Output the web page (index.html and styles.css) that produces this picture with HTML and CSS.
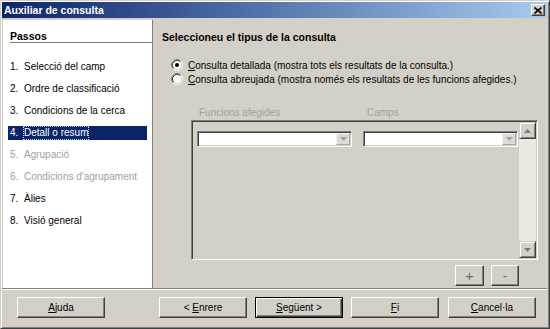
FILE: index.html
```html
<!DOCTYPE html>
<html lang="ca">
<head>
<meta charset="utf-8">
<title>Auxiliar de consulta</title>
<link rel="stylesheet" href="styles.css">
</head>
<body>
<div class="window">
  <div class="titlebar">
    <span class="title">Auxiliar de consulta</span>
    <span class="close-btn">
      <svg width="8" height="7" viewBox="0 0 8 7"><path d="M0.5 0.5 L7.5 6.5 M7.5 0.5 L0.5 6.5" stroke="#000" stroke-width="1.6" fill="none"/></svg>
    </span>
  </div>
  <div class="main">
    <div class="steps">
      <div class="steps-head">Passos</div>
      <ul class="step-list">
        <li><span class="num">1.</span>Selecció del camp</li>
        <li><span class="num">2.</span>Ordre de classificació</li>
        <li><span class="num">3.</span>Condicions de la cerca</li>
        <li class="active"><span class="num">4.</span><span class="focus">Detall o resum</span></li>
        <li class="disabled"><span class="num">5.</span>Agrupació</li>
        <li class="disabled"><span class="num">6.</span>Condicions d'agrupament</li>
        <li><span class="num">7.</span>Àlies</li>
        <li><span class="num">8.</span>Visió general</li>
      </ul>
    </div>
    <div class="content">
      <div class="heading">Seleccioneu el tipus de la consulta</div>
      <div class="radios">
        <div class="radio">
          <svg class="radio-box" width="12" height="12" viewBox="0 0 12 12">
            <circle cx="6" cy="6" r="4.5" fill="#fff"/>
            <path d="M2.11 9.89 A5.5 5.5 0 0 1 9.89 2.11" stroke="#808080" fill="none"/>
            <path d="M9.89 2.11 A5.5 5.5 0 0 1 2.11 9.89" stroke="#fff" fill="none"/>
            <path d="M2.82 9.18 A4.5 4.5 0 0 1 9.18 2.82" stroke="#404040" fill="none"/>
            <path d="M9.18 2.82 A4.5 4.5 0 0 1 2.82 9.18" stroke="#d4d0c8" fill="none"/>
            <circle cx="6" cy="6" r="2" fill="#000"/>
          </svg>
          <span><u>C</u>onsulta detallada (mostra tots els resultats de la consulta.)</span>
        </div>
        <div class="radio">
          <svg class="radio-box" width="12" height="12" viewBox="0 0 12 12">
            <circle cx="6" cy="6" r="4.5" fill="#fff"/>
            <path d="M2.11 9.89 A5.5 5.5 0 0 1 9.89 2.11" stroke="#808080" fill="none"/>
            <path d="M9.89 2.11 A5.5 5.5 0 0 1 2.11 9.89" stroke="#fff" fill="none"/>
            <path d="M2.82 9.18 A4.5 4.5 0 0 1 9.18 2.82" stroke="#404040" fill="none"/>
            <path d="M9.18 2.82 A4.5 4.5 0 0 1 2.82 9.18" stroke="#d4d0c8" fill="none"/>
          </svg>
          <span><u>C</u>onsulta abreujada (mostra només els resultats de les funcions afegides.)</span>
        </div>
      </div>
      <div class="col-labels">
        <span class="col-label first">Funcions afegides</span>
        <span class="col-label">Camps</span>
      </div>
      <div class="groupbox">
        <div class="rows">
          <div class="combo">
            <span class="combo-field"></span>
            <span class="combo-btn"><svg width="7" height="4" viewBox="0 0 7 4"><path d="M0 0 H7 L3.5 4 Z" fill="#a0a0a0"/></svg></span>
          </div>
          <div class="combo">
            <span class="combo-field"></span>
            <span class="combo-btn"><svg width="7" height="4" viewBox="0 0 7 4"><path d="M0 0 H7 L3.5 4 Z" fill="#a0a0a0"/></svg></span>
          </div>
        </div>
        <div class="scrollbar">
          <div class="sb-btn"><svg width="7" height="4" viewBox="0 0 7 4"><path d="M0 4 H7 L3.5 0 Z" fill="#7a7a7a"/></svg></div>
          <div class="sb-track"></div>
          <div class="sb-btn"><svg width="7" height="4" viewBox="0 0 7 4"><path d="M0 0 H7 L3.5 4 Z" fill="#7a7a7a"/></svg></div>
        </div>
      </div>
      <div class="pm-row">
        <span class="pm-btn plus">+</span>
        <span class="pm-btn minus">-</span>
      </div>
    </div>
  </div>
  <div class="footer">
    <span class="btn help"><span><u>A</u>juda</span></span>
    <span class="btn back"><span>&lt; <u>E</u>nrere</span></span>
    <span class="btn next default"><span><u>S</u>egüent &gt;</span></span>
    <span class="btn finish"><span><u>F</u>i</span></span>
    <span class="btn cancel"><span><u>C</u>ancel·la</span></span>
  </div>
</div>
</body>
</html>
```

FILE: styles.css
```css
* { box-sizing: border-box; }

body {
  margin: 0;
  font-family: "Liberation Sans", Arial, sans-serif;
  font-size: 10px;
  color: #000;
  background: #d4d0c8;
}

.window {
  width: 550px;
  height: 329px;
  background: #d4d0c8;
  border: 1px solid;
  border-color: #d4d0c8 #404040 #404040 #d4d0c8;
  box-shadow: inset 1px 1px #fff, inset -1px -1px #808080;
  padding: 1px 2px 2px 1px;
  display: flex;
  flex-direction: column;
}

/* title bar */
.titlebar {
  height: 16px;
  flex: none;
  display: flex;
  align-items: center;
  justify-content: space-between;
  background: linear-gradient(to right, #0a246a, #a6caf0);
  padding: 0 2px 0 2px;
}

.title {
  color: #fff;
  font-weight: bold;
  font-size: 10.5px;
}

.close-btn {
  width: 14px;
  height: 12px;
  background: #d4d0c8;
  border: 1px solid;
  border-color: #fff #404040 #404040 #fff;
  box-shadow: inset -1px -1px #808080;
  display: flex;
  align-items: center;
  justify-content: center;
}

.close-btn svg { display: block; }

/* main area */
.main {
  margin-top: 2px;
  height: 268px;
  flex: none;
  display: flex;
}

.steps {
  width: 150px;
  margin-left: 1px;
  background: #fff;
  border-right: 1px solid #808080;
  flex: none;
}

.steps-head {
  margin: 10px 0 0 7px;
  height: 13px;
  line-height: 12px;
  font-weight: bold;
  font-size: 10.5px;
  border-bottom: 1px solid #7a7a7a;
}

.step-list {
  list-style: none;
  margin: 17px 0 0 0;
  padding: 0;
}

.step-list li {
  height: 14px;
  line-height: 14px;
  margin: 0 5px 8px 5px;
  padding-left: 2px;
  display: flex;
  white-space: nowrap;
}

.step-list .num {
  width: 14px;
  flex: none;
}

.step-list li.active {
  background: #0a246a;
  color: #fff;
}

.step-list .focus {
  outline: 1px dotted #c8c8c8;
  outline-offset: -1px;
  padding: 0 1px;
  margin-left: -1px;
}

.step-list li.disabled {
  color: #a0a0a0;
}

/* content */
.content {
  flex: 1;
  padding: 11px 0 0 9px;
}

.heading {
  font-weight: bold;
  font-size: 10.5px;
  line-height: 13px;
}

.radios {
  margin-top: 14px;
}

.radio {
  height: 14px;
  display: flex;
  align-items: center;
  white-space: nowrap;
}

.radio-box {
  margin-left: 9px;
  margin-right: 5px;
  flex: none;
}

.col-labels {
  margin-top: 21px;
  height: 12px;
  line-height: 12px;
  display: flex;
  color: #a0a0a0;
}

.col-label.first {
  margin-left: 37px;
  width: 168px;
}

.groupbox {
  margin: 1px 0 0 29px;
  width: 347px;
  height: 140px;
  border: 1px solid;
  border-color: #808080 #fff #fff #808080;
  box-shadow: inset 1px 1px #404040, inset -1px -1px #d4d0c8;
  padding: 1px;
  display: flex;
}

.rows {
  flex: 1;
  display: flex;
  padding: 9px 0 0 4px;
  gap: 11px;
  align-items: flex-start;
}

.combo {
  width: 155px;
  height: 16px;
  background: #fff;
  border: 1px solid;
  border-color: #808080 #fff #fff #808080;
  box-shadow: inset 1px 1px #404040, inset -1px -1px #d4d0c8;
  padding: 1px;
  display: flex;
}

.combo-field { flex: 1; }

.combo-btn {
  width: 14px;
  height: 12px;
  background: #dedbd5;
  border: 1px solid;
  border-color: #f4f3f0 #a8a6a0 #a8a6a0 #f4f3f0;
  display: flex;
  align-items: center;
  justify-content: center;
}

.combo-btn svg, .sb-btn svg { display: block; }

.scrollbar {
  width: 17px;
  display: flex;
  flex-direction: column;
  background: #ebe9e4;
}

.sb-btn {
  height: 17px;
  background: #d4d0c8;
  border: 1px solid;
  border-color: #d4d0c8 #404040 #404040 #d4d0c8;
  box-shadow: inset 1px 1px #fff, inset -1px -1px #808080;
  display: flex;
  align-items: center;
  justify-content: center;
}

.sb-track { flex: 1; }

.pm-row {
  margin: 5px 0 0 29px;
  width: 347px;
  display: flex;
  justify-content: flex-end;
  padding-right: 19px;
  gap: 7px;
}

.pm-btn {
  height: 21px;
  width: 29px;
  border: 1px solid;
  border-color: #fff #404040 #404040 #fff;
  box-shadow: inset -1px -1px #808080;
  display: flex;
  align-items: center;
  justify-content: center;
  color: #707070;
  font-size: 15px;
  line-height: 1;
}

.pm-btn.minus { width: 28px; font-size: 14px; }

/* footer */
.footer {
  flex: 1;
  border-top: 1px solid #808080;
  box-shadow: inset 0 1px #fff;
  padding-top: 8px;
  display: flex;
  align-items: flex-start;
}

.btn {
  width: 88px;
  height: 21px;
  border: 1px solid;
  border-color: #fff #404040 #404040 #fff;
  box-shadow: inset -1px -1px #808080;
  display: flex;
  align-items: center;
  justify-content: center;
  white-space: nowrap;
}

.btn.default {
  border-color: #000;
  box-shadow: inset 1px 1px #fff, inset -1px -1px #404040, inset -2px -2px #808080;
}

.help { margin-left: 15px; }
.back { margin-left: 54px; }
.next { margin-left: 8px; }
.finish { margin-left: 8px; }
.cancel { margin-left: 9px; }
```
